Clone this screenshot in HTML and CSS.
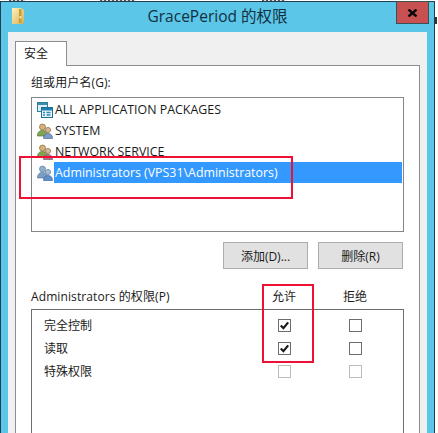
FILE: index.html
```html
<!DOCTYPE html>
<html lang="zh">
<head>
<meta charset="utf-8">
<title>GracePeriod 的权限</title>
<link rel="stylesheet" href="styles.css">
</head>
<body>
<div class="behind"><span class="frag frag-a"></span><span class="frag frag-b"></span><span class="frag frag-c"></span></div>
<div class="window">
  <header class="titlebar">
    <svg class="folder" viewBox="0 0 14 16" width="14" height="16">
      <defs><linearGradient id="fg" x1="0" x2="1" y1="0" y2="1"><stop offset="0" stop-color="#fdf3c0"/><stop offset="1" stop-color="#d9b04a"/></linearGradient></defs>
      <path d="M1 0h9l3 2v13l-3 1H1z" fill="url(#fg)"/>
      <path d="M8 1h2.500v14H8z" fill="#c99a3a"/>
      <path d="M8.500 8h2v2.500h-2z" fill="#f4e3a0"/>
    </svg>
    <h1 class="title">GracePeriod 的权限</h1>
    <button class="close" aria-label="关闭">
      <svg viewBox="0 0 11 8" width="11" height="8"><path d="M1.500 0.500L9.500 7.500M9.500 0.500L1.500 7.500" stroke="#0a0a0a" stroke-width="2.400" fill="none"/></svg>
    </button>
  </header>
  <main class="content">
    <div class="tabs"><div class="tab">安全</div></div>
    <section class="panel">
      <div class="label">组或用户名(G):</div>
      <ul class="users">
        <li class="user">
          <svg class="icon" viewBox="0 0 16 16" width="16" height="16">
            <rect x="0.500" y="0.500" width="10" height="9" fill="#dfeef6" stroke="#2f7f9c"/>
            <rect x="1" y="1" width="9" height="2" fill="#3d8fb0"/>
            <rect x="4.500" y="5.500" width="11" height="10" fill="#eaf5fb" stroke="#1f6f95"/>
            <rect x="5" y="6" width="10" height="2.500" fill="#1f80ae"/>
            <path d="M6 10.500h2M9.500 10.500h4M6 13h2M9.500 13h4" stroke="#2a8ab8" stroke-width="1.400"/>
          </svg>
          <span class="name">ALL APPLICATION PACKAGES</span>
        </li>
        <li class="user">
          <svg class="icon" viewBox="0 0 16 16" width="16" height="16">
            <circle cx="5.500" cy="4" r="3" fill="#d8b27a" stroke="#8a6a3a" stroke-width="0.700"/>
            <path d="M0.500 13c0-4 2-5.500 5-5.500s4.500 1.500 4.500 5.500z" fill="#7fa452" stroke="#55763a" stroke-width="0.700"/>
            <circle cx="11" cy="7" r="2.600" fill="#d9b890" stroke="#85684a" stroke-width="0.700"/>
            <path d="M6.500 15.500c0-3.500 1.800-5 4.500-5s4.500 1.500 4.500 5z" fill="#7d9ac4" stroke="#4f6f9e" stroke-width="0.700"/>
          </svg>
          <span class="name">SYSTEM</span>
        </li>
        <li class="user">
          <svg class="icon" viewBox="0 0 16 16" width="16" height="16">
            <circle cx="5.500" cy="4" r="3" fill="#d8b27a" stroke="#8a6a3a" stroke-width="0.700"/>
            <path d="M0.500 13c0-4 2-5.500 5-5.500s4.500 1.500 4.500 5.500z" fill="#7fa452" stroke="#55763a" stroke-width="0.700"/>
            <circle cx="11" cy="7" r="2.600" fill="#d9b890" stroke="#85684a" stroke-width="0.700"/>
            <path d="M6.500 15.500c0-3.500 1.800-5 4.500-5s4.500 1.500 4.500 5z" fill="#a87a8c" stroke="#7a5566" stroke-width="0.700"/>
          </svg>
          <span class="name">NETWORK SERVICE</span>
        </li>
        <li class="user selected">
          <svg class="icon" viewBox="0 0 16 16" width="16" height="16">
            <circle cx="5.500" cy="4" r="3" fill="#8fb0cc" stroke="#5f82a2" stroke-width="0.700"/>
            <path d="M0.500 13c0-4 2-5.500 5-5.500s4.500 1.500 4.500 5.500z" fill="#7c9fc0" stroke="#557a9e" stroke-width="0.700"/>
            <circle cx="11" cy="7" r="2.600" fill="#a3bdd4" stroke="#5f82a2" stroke-width="0.700"/>
            <path d="M6.500 15.500c0-3.500 1.800-5 4.500-5s4.500 1.500 4.500 5z" fill="#5f8fc4" stroke="#3f6fa4" stroke-width="0.700"/>
          </svg>
          <span class="name">Administrators (VPS31\Administrators)</span>
        </li>
      </ul>
      <div class="actions">
        <button class="btn">添加(D)...</button>
        <button class="btn">删除(R)</button>
      </div>
      <div class="perm-head">
        <span class="perm-title">Administrators 的权限(P)</span>
        <span class="col">允许</span>
        <span class="col">拒绝</span>
      </div>
      <div class="perms">
        <div class="perm">
          <span>完全控制</span>
          <span class="col"><span class="cb"><svg viewBox="0 0 11 11" width="11" height="11"><path d="M1.800 5.500L4.400 8.200L9.200 2.400" stroke="#1a1a1a" stroke-width="2.200" fill="none"/></svg></span></span>
          <span class="col"><span class="cb"></span></span>
        </div>
        <div class="perm">
          <span>读取</span>
          <span class="col"><span class="cb"><svg viewBox="0 0 11 11" width="11" height="11"><path d="M1.800 5.500L4.400 8.200L9.200 2.400" stroke="#1a1a1a" stroke-width="2.200" fill="none"/></svg></span></span>
          <span class="col"><span class="cb"></span></span>
        </div>
        <div class="perm">
          <span>特殊权限</span>
          <span class="col"><span class="cb off"></span></span>
          <span class="col"><span class="cb off"></span></span>
        </div>
      </div>
    </section>
  </main>
  <div class="mark mark-user"></div>
  <div class="mark mark-allow"></div>
  <span class="peek"></span>
</div>
</body>
</html>
```

FILE: styles.css
```css
html, body {
  margin: 0;
  height: 433px;
  overflow: hidden;
  background: #fff;
}
body {
  font-family: "Open Sans", "Noto Sans CJK SC", sans-serif;
  font-size: 12px;
  color: #1a1a1a;
}
.behind {
  height: 1px;
  display: flex;
}
.frag {
  height: 1px;
  background: repeating-linear-gradient(90deg, #555 0 2px, #ddd 2px 4px);
}
.frag-a {
  width: 16px;
  margin-left: 9px;
}
.frag-b {
  width: 35px;
  margin-left: 75px;
}
.frag-c {
  width: 23px;
  margin-left: 127px;
}
.window {
  position: relative;
  box-sizing: border-box;
  width: 435px;
  height: 432px;
  border: 1px solid #20404f;
  border-bottom: 0;
  background: #5bc6e8;
  display: flex;
  flex-direction: column;
}
.peek {
  position: absolute;
  left: 434px;
  top: 15px;
  width: 2px;
  height: 7px;
  background: #333;
}
.titlebar {
  position: relative;
  height: 30px;
  flex: none;
  display: flex;
  align-items: center;
  justify-content: center;
}
.folder {
  position: absolute;
  left: 10px;
  top: 6px;
}
.title {
  margin: 0 0 4px;
  font: 400 15.500px "Open Sans", "Noto Sans CJK SC", sans-serif;
  color: #12303f;
}
.close {
  position: absolute;
  right: 5px;
  top: -1px;
  width: 33px;
  height: 23px;
  padding: 0;
  border: 1px solid #3d4f55;
  background: #c75050;
  display: flex;
  align-items: center;
  justify-content: center;
}
.content {
  flex: 1;
  min-height: 0;
  margin: 0 7px;
  padding: 9px 7px 0;
  background: #f0f0f0;
  display: flex;
  flex-direction: column;
}
.tabs {
  display: flex;
  height: 24px;
  flex: none;
}
.tab {
  box-sizing: border-box;
  width: 52px;
  height: 25px;
  padding: 3px 0 0 8px;
  background: #fff;
  border: 1px solid #8c8e94;
  border-bottom: 0;
  position: relative;
  z-index: 1;
  font-size: 12px;
  line-height: 18px;
}
.panel {
  flex: 1;
  min-height: 0;
  border: 1px solid #8c8e94;
  border-bottom: 0;
  background: #fff;
  padding: 9px 15px 0;
  box-sizing: border-box;
  display: flex;
  flex-direction: column;
}
.label {
  height: 16px;
  line-height: 16px;
  margin-bottom: 6px;
  letter-spacing: 0.1px;
}
.users {
  list-style: none;
  margin: 0;
  padding: 1px 1px 0 5px;
  height: 135px;
  flex: none;
  box-sizing: border-box;
  border: 1px solid #82878c;
  display: flex;
  flex-direction: column;
}
.user {
  height: 21px;
  flex: none;
  display: flex;
  align-items: center;
  line-height: 21px;
}
.icon {
  flex: none;
  margin-right: 1px;
}
.name {
  flex: 1;
  padding-left: 1px;
  white-space: nowrap;
  font-size: 12.400px;
}
.selected .name {
  background: #3399ff;
  color: #fff;
}
.actions {
  display: flex;
  justify-content: flex-end;
  gap: 10px;
  margin-top: 10px;
  margin-right: 1px;
  flex: none;
}
.btn {
  width: 85px;
  height: 27px;
  padding: 0;
  border: 1px solid #adadad;
  background: #e1e1e1;
  font: inherit;
  color: #1a1a1a;
}
.perm-head {
  display: grid;
  grid-template-columns: 217px 72px 70px;
  flex: none;
  height: 16px;
  line-height: 16px;
  margin-top: 20px;
  margin-bottom: 4px;
}
.perm-title {
  letter-spacing: 0.1px;
  white-space: nowrap;
}
.col {
  display: flex;
  justify-content: center;
  align-items: center;
}
.perms {
  box-sizing: border-box;
  flex: 1;
  min-height: 0;
  border: 1px solid #6e6e6e;
  border-bottom: 0;
  padding: 4px 0 0 12px;
}
.perm {
  display: grid;
  grid-template-columns: 205px 71px 71px;
  height: 23px;
  line-height: 23px;
}
.cb {
  box-sizing: border-box;
  width: 13px;
  height: 13px;
  margin-top: -1px;
  border: 1px solid #6d6d6d;
  background: #fff;
  display: flex;
  align-items: center;
  justify-content: center;
}
.cb.off {
  border-color: #bcbcbc;
}
.mark {
  position: absolute;
  box-sizing: border-box;
  border: 2px solid #ee1133;
  pointer-events: none;
}
.mark-user {
  left: 18px;
  top: 154px;
  width: 274px;
  height: 43px;
}
.mark-allow {
  left: 261px;
  top: 282px;
  width: 52px;
  height: 79px;
}
```
